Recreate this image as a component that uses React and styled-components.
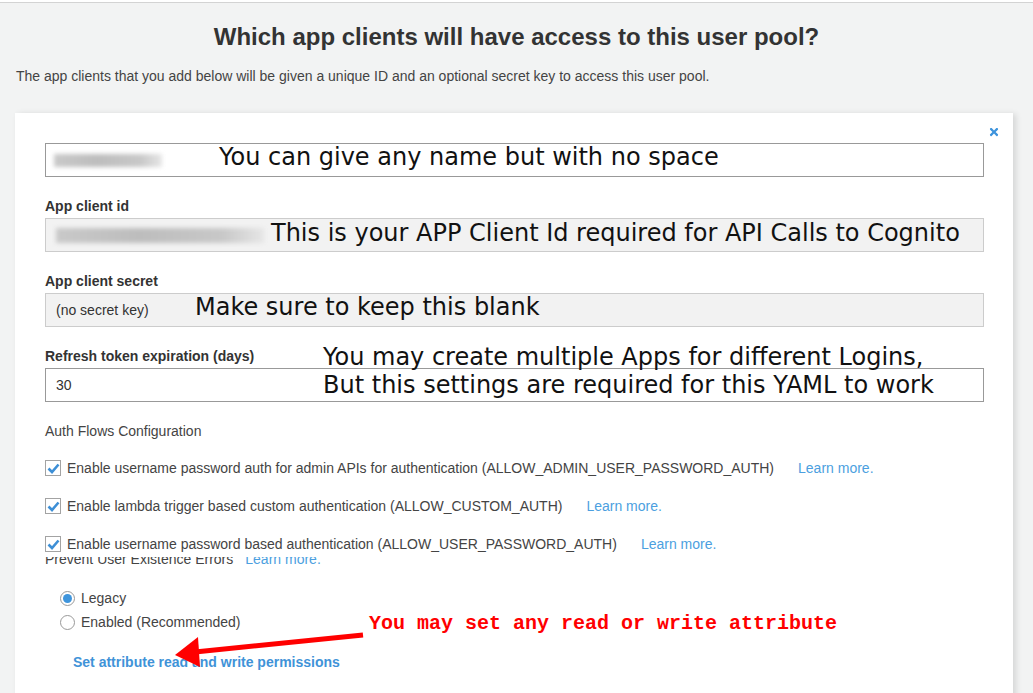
import React from 'react';
import styled, { createGlobalStyle } from 'styled-components';
import { FaTimes } from 'react-icons/fa';

const GlobalStyle = createGlobalStyle`
  html, body { margin: 0; padding: 0; background: #fff; overflow: hidden; }
  body { font-family: "Liberation Sans", Arial, sans-serif; color: #444; }
  * { box-sizing: border-box; }
`;

const Page = styled.div`
  margin-top: 2px;
  border-top: 1px solid #d3d3d3;
  background: #f2f3f3;
  height: 691px;
  padding-top: 20px;
  overflow: hidden;
`;

const Title = styled.h1`
  margin: 0;
  text-align: center;
  font-size: 24px;
  line-height: 28px;
  font-weight: bold;
  color: #333;
`;

const Subtitle = styled.p`
  margin: 17px 0 0 16px;
  font-size: 14px;
  line-height: 16px;
  color: #444;
`;

const Card = styled.div`
  position: relative;
  margin: 29px 20px 0 15px;
  background: #fff;
  padding: 30px 29px 40px 30px;
  min-height: 700px;
  box-shadow: 3px 1px 6px rgba(0, 0, 0, 0.12);
`;

const CloseButton = styled.span`
  position: absolute;
  top: 13px;
  right: 13px;
  color: #3d93dc;
  font-size: 12px;
  line-height: 0;
`;

const Field = styled.div`
  position: relative;
  margin-top: ${(p) => (p.$first ? '0' : '21px')};
`;

const Label = styled.div`
  font-size: 14px;
  line-height: 16px;
  font-weight: bold;
  color: #333;
  margin-bottom: 4px;
`;

const InputBox = styled.div`
  position: relative;
  display: flex;
  align-items: center;
  height: 34px;
  padding: 0 10px;
  border: 1px solid ${(p) => (p.$readonly ? '#cccccc' : '#999999')};
  background: ${(p) => (p.$readonly ? '#f2f2f2' : '#ffffff')};
  font-size: 14px;
  color: #333;
`;

const Blur = styled.span`
  display: inline-block;
  width: ${(p) => p.$w}px;
  height: ${(p) => p.$h}px;
  margin-left: ${(p) => p.$ml || 0}px;
  background: linear-gradient(90deg, #c9c9c9, #bdbdbd 40%, #c8c8c8 80%, #e6e6e6);
  filter: blur(2px);
`;

const Note = styled.div`
  position: absolute;
  left: ${(p) => p.$left}px;
  top: ${(p) => p.$top}px;
  font-family: "DejaVu Sans", Verdana, sans-serif;
  font-size: 24px;
  line-height: 28px;
  color: #111;
  white-space: nowrap;
`;

const SectionTitle = styled.div`
  margin-top: 21px;
  font-size: 14px;
  line-height: 16px;
  color: #444;
`;

const CheckList = styled.div`
  margin-top: 19px;
  display: flex;
  flex-direction: column;
  gap: 18px;
`;

const CheckRow = styled.label`
  display: flex;
  align-items: center;
  height: 20px;
  font-size: 14px;
  color: #444;
`;

const Box = styled.span`
  width: 16px;
  height: 16px;
  border: 1px solid #a3a3a3;
  background: #fff;
  display: inline-flex;
  align-items: center;
  justify-content: center;
  margin-right: 6px;
  flex: none;
`;

const LearnMore = styled.a`
  color: #4c9fe0;
  font-size: 14px;
  margin-left: ${(p) => p.$ml || 24}px;
  text-decoration: none;
`;

const ClipStrip = styled.div`
  margin-top: 3px;
  height: 8px;
  overflow: hidden;
`;

const ClipInner = styled.div`
  margin-top: -6px;
  display: flex;
  font-size: 14px;
  line-height: 16px;
  color: #444;
`;

const RadioGroup = styled.div`
  margin-top: 23px;
  margin-left: 15px;
  display: flex;
  flex-direction: column;
  gap: 4px;
`;

const RadioRow = styled.label`
  display: flex;
  align-items: center;
  height: 20px;
  font-size: 14px;
  color: #444;
`;

const RadioDot = styled.span`
  width: 15px;
  height: 15px;
  border-radius: 50%;
  border: 1px solid #999;
  background: #fff;
  margin-right: 6px;
  display: inline-flex;
  align-items: center;
  justify-content: center;
  flex: none;
  &::after {
    content: '';
    width: 9px;
    height: 9px;
    border-radius: 50%;
    background: ${(p) => (p.$checked ? '#3f95dc' : 'transparent')};
  }
`;

const PermLink = styled.a`
  display: block;
  margin-top: 22px;
  margin-left: 28px;
  font-size: 14px;
  line-height: 16px;
  font-weight: bold;
  color: #3f93d8;
  text-decoration: none;
`;

const RedNote = styled.div`
  position: absolute;
  left: 354px;
  top: 500px;
  font-family: "Liberation Mono", "Courier New", monospace;
  font-weight: bold;
  font-size: 20px;
  line-height: 22px;
  color: #ff0000;
  white-space: nowrap;
`;

const ArrowLayer = styled.svg`
  position: absolute;
  left: 0;
  top: 0;
  pointer-events: none;
`;

const Check = () => (
  <svg width="13" height="11" viewBox="0 0 13 11">
    <path d="M1.5 5.5 L5 9 L11.5 1.5" fill="none" stroke="#3d8fd6" strokeWidth="2.6" />
  </svg>
);

const flows = [
  ['Enable username password auth for admin APIs for authentication (ALLOW_ADMIN_USER_PASSWORD_AUTH)'],
  ['Enable lambda trigger based custom authentication (ALLOW_CUSTOM_AUTH)'],
  ['Enable username password based authentication (ALLOW_USER_PASSWORD_AUTH)'],
];

export default function App() {
  return (
    <>
      <GlobalStyle />
      <Page>
        <Title>Which app clients will have access to this user pool?</Title>
        <Subtitle>
          The app clients that you add below will be given a unique ID and an optional secret key to access this user pool.
        </Subtitle>
        <Card>
          <CloseButton><FaTimes /></CloseButton>

          <Field $first>
            <InputBox>
              <Blur $w={108} $h={13} $ml={-2} />
              <Note $left={173} $top={-1}>You can give any name but with no space</Note>
            </InputBox>
          </Field>

          <Field>
            <Label>App client id</Label>
            <InputBox $readonly>
              <Blur $w={208} $h={15} />
              <Note $left={225} $top={0}>This is your APP Client Id required for API Calls to Cognito</Note>
            </InputBox>
          </Field>

          <Field>
            <Label>App client secret</Label>
            <InputBox $readonly>
              (no secret key)
              <Note $left={149} $top={-1}>Make sure to keep this blank</Note>
            </InputBox>
          </Field>

          <Field>
            <Label>Refresh token expiration (days)</Label>
            <InputBox>30</InputBox>
            <Note $left={278} $top={-5}>
              You may create multiple Apps for different Logins,
              <br />
              But this settings are required for this YAML to work
            </Note>
          </Field>

          <SectionTitle>Auth Flows Configuration</SectionTitle>

          <CheckList>
            {flows.map(([text], i) => (
              <CheckRow key={i}>
                <Box><Check /></Box>
                {text}
                <LearnMore href="#">Learn more.</LearnMore>
              </CheckRow>
            ))}
          </CheckList>

          <ClipStrip>
            <ClipInner>
              Prevent User Existence Errors
              <LearnMore href="#" $ml={12}>Learn more.</LearnMore>
            </ClipInner>
          </ClipStrip>

          <RadioGroup>
            <RadioRow><RadioDot $checked />Legacy</RadioRow>
            <RadioRow><RadioDot />Enabled (Recommended)</RadioRow>
          </RadioGroup>

          <PermLink href="#">Set attribute read and write permissions</PermLink>

          <RedNote>You may set any read or write attribute</RedNote>
          <ArrowLayer width="998" height="580" viewBox="0 0 998 580">
            <line x1="348" y1="522" x2="180" y2="539" stroke="#ff0000" strokeWidth="5" />
            <polygon points="160,542 183,524 185,554" fill="#ff0000" />
          </ArrowLayer>
        </Card>
      </Page>
    </>
  );
}
